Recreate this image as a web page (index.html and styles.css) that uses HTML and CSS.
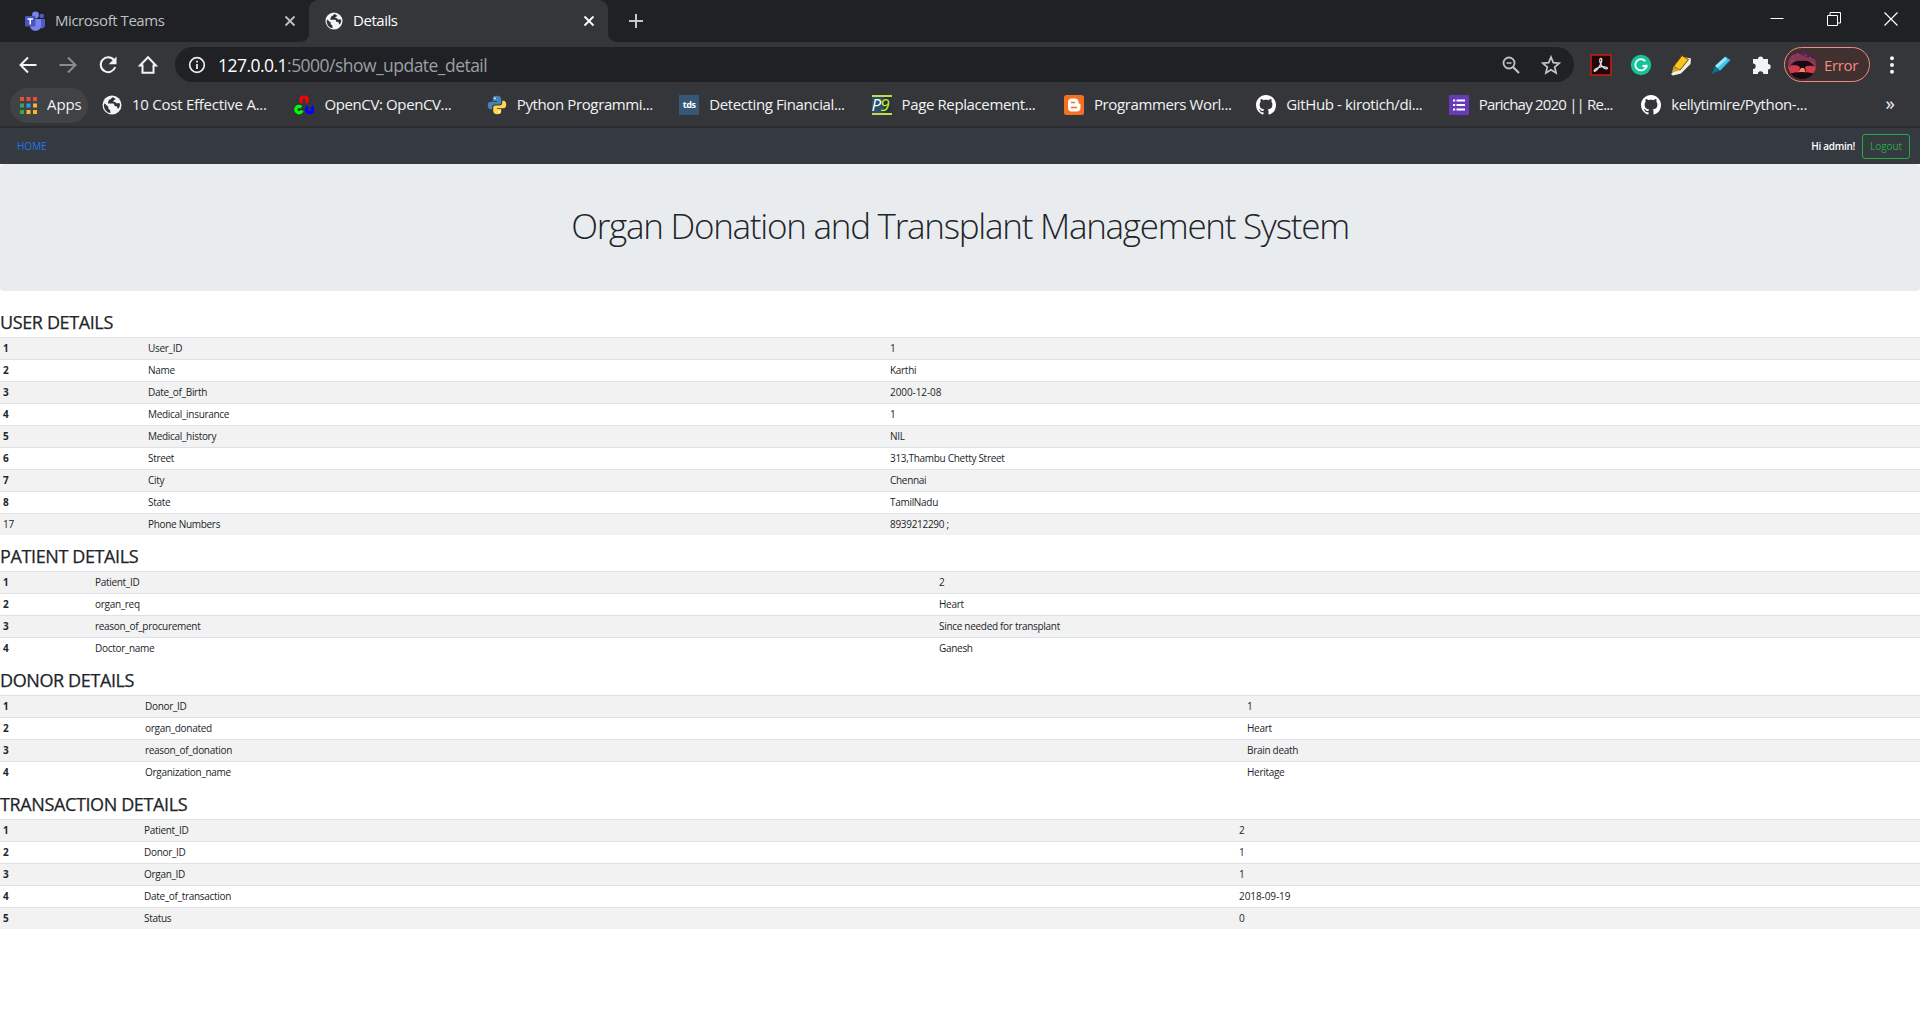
FILE: index.html
```html
<!DOCTYPE html>
<html lang="en">
<head>
<meta charset="utf-8">
<title>Details</title>
<link rel="stylesheet" href="styles.css">
</head>
<body>
<svg class="defs" aria-hidden="true">
  <symbol id="globe" viewBox="0 0 20 20"><circle cx="10" cy="10" r="9.5" fill="#f1f3f4"/><path d="M2.3 8.2l4 3.6v1.6l2 2v2.7C4.500 17.500 1.800 14 1.900 10zM11 2.200c-2 .5-1.500 2-3.500 2.400-1.200.2-.6 2-1.500 2.400v1.600h5.400c1.200.4.6 2.400 1.800 2.600h1.500c.8 1 .6 2.300 1.500 2.600 1.500-1.600 2-3.500 1.600-5.600-1.500.3-3.500.2-4-.5-.5-1-1.300-1-2.600-1-.3-1.300 1.800-1.400 2.400-2.600z" fill="#303235"/></symbol>
  <symbol id="close" viewBox="0 0 12 12"><path d="M1.500 1.500l9 9M10.500 1.500l-9 9" fill="none" stroke="currentColor" stroke-width="1.800"/></symbol>
  <symbol id="github" viewBox="0 0 16 16"><path fill="#fff" d="M8 0C3.580 0 0 3.580 0 8c0 3.540 2.290 6.530 5.470 7.590.4.07.55-.17.55-.38 0-.19-.01-.82-.01-1.490-2.010.37-2.530-.49-2.690-.94-.09-.23-.48-.94-.82-1.130-.28-.15-.68-.52-.01-.53.63-.01 1.080.58 1.230.82.72 1.210 1.870.87 2.330.66.07-.52.28-.87.51-1.070-1.780-.2-3.640-.89-3.640-3.950 0-.87.31-1.590.82-2.150-.08-.2-.36-1.020.08-2.120 0 0 .67-.21 2.200.82.64-.18 1.320-.27 2-.27s1.360.09 2 .27c1.530-1.040 2.200-.82 2.200-.82.44 1.100.16 1.920.08 2.120.51.56.82 1.270.82 2.150 0 3.070-1.870 3.750-3.650 3.950.29.25.54.73.54 1.480 0 1.070-.01 1.930-.01 2.200 0 .21.15.46.55.38A8.010 8.010 0 0016 8c0-4.420-3.580-8-8-8z"/></symbol>
</svg>

<header class="browser">
  <div class="tabs">
    <div class="tab">
      <svg class="i20" viewBox="0 0 20 20"><circle cx="16.800" cy="5" r="2.300" fill="#5059c9"/><path d="M13 8h7v6c0 4-5 4.500-6 2z" fill="#5059c9"/><circle cx="10.500" cy="4" r="3.400" fill="#7b83eb"/><path d="M5 8h11v6.500c0 7-11 7-11 0z" fill="#7b83eb"/><rect x="0" y="5" width="10.500" height="10.500" rx="1" fill="#4b53bc"/><path d="M2.500 8h5.500M5.250 8v5.500" stroke="#fff" stroke-width="1.500"/></svg>
      <span class="tab-title">Microsoft Teams</span>
      <svg class="x"><use href="#close"/></svg>
    </div>
    <div class="tab active">
      <svg class="i18"><use href="#globe"/></svg>
      <span class="tab-title">Details</span>
      <svg class="x"><use href="#close"/></svg>
    </div>
    <svg class="plus" viewBox="0 0 16 16"><path d="M8 1v14M1 8h14" stroke="#c6c9cc" stroke-width="2"/></svg>
    <div class="window">
      <svg viewBox="0 0 14 14"><path d="M.5 6.500h13" stroke="#fff"/></svg>
      <svg viewBox="0 0 14 14"><path d="M.5 3.500h10v10H.5zM3 3V.5h10.500V11H11" fill="none" stroke="#fff"/></svg>
      <svg viewBox="0 0 14 14"><path d="M.5.5l13 13M13.500.5l-13 13" stroke="#fff" stroke-width="1.200"/></svg>
    </div>
  </div>

  <div class="toolbar">
    <div class="nav-icons">
      <svg viewBox="0 0 20 20"><path d="M18.500 10H3M10 2.500L2.500 10l7.500 7.500" class="stroke"/></svg>
      <svg viewBox="0 0 20 20" class="dim"><path d="M1.500 10H17M10 2.500l7.500 7.500-7.500 7.500" class="stroke"/></svg>
      <svg viewBox="0 0 20 20"><path d="M16 5.200A7.400 7.400 0 1 0 17.200 12" class="stroke"/><path d="M18.500 1.500v7.800h-7.800z" fill="#f1f3f4"/></svg>
      <svg viewBox="0 0 20 20"><path d="M2 10.500l8-8.300 8 8.300h-2.500v7.300h-11v-7.300z" class="stroke"/></svg>
    </div>
    <div class="omnibox">
      <svg class="info" viewBox="0 0 18 18"><circle cx="9" cy="9" r="7.300" fill="none" stroke="#e8eaed" stroke-width="1.700"/><path d="M9 8v5M9 4.800v1.700" stroke="#e8eaed" stroke-width="1.800"/></svg>
      <span class="url"><b>127.0.0.1</b>:5000/show_update_detail</span>
      <svg class="i18" viewBox="0 0 18 18"><circle cx="7" cy="7" r="5.500" fill="none" stroke="#bdc1c6" stroke-width="1.800"/><path d="M11 11l6 6" stroke="#bdc1c6" stroke-width="2.200"/><path d="M4.500 7h5" stroke="#bdc1c6" stroke-width="1.500"/></svg>
      <svg class="i20 star" viewBox="0 0 20 20"><path d="M10 2l2.300 5.600 6 .5-4.600 3.900 1.400 5.900L10 14.800l-5.100 3.100L6.300 12 1.700 8.100l6-.5z" fill="none" stroke="#c3c7cb" stroke-width="1.700"/></svg>
    </div>
    <div class="extensions">
      <svg viewBox="0 0 22 22"><rect x="1" y="1" width="20" height="20" fill="#220506" stroke="#c11d12" stroke-width="1.600"/><path d="M10.500 4.500c2.500-.5 1 5-1.500 8.500-2 3.500-5 5.500-4.800 3.600.2-2 6-4.200 9.500-4 4 .1 5 2.500 2.500 2.300-3-.3-6.500-5-6.500-8.500 0-1 .2-1.700.8-1.900z" fill="none" stroke="#ddd" stroke-width="1.300"/></svg>
      <svg viewBox="0 0 22 22"><circle cx="11" cy="11" r="10.200" fill="#15c39a"/><path d="M15.200 7.200A5.600 5.600 0 1 0 16.400 12H12.500" fill="none" stroke="#fff" stroke-width="1.800"/><path d="M14 10.800h3.400V14z" fill="#fff"/></svg>
      <svg viewBox="0 0 22 22"><path d="M4 17l10-14 7 1.500-.5 5.500-9.500 9.500-8 2-2-1.500z" fill="#f4f1df"/><path d="M3.500 12.500L12 1.500l6.500 4L10 16z" fill="#f8c51c" stroke="#5b4514"/><path d="M3.500 12.500l6.500 3.500-4 1.500-4 .5z" fill="#d5a128"/></svg>
      <svg viewBox="0 0 22 22"><path d="M5 12L15.500 2.500 20.500 6 10 17z" fill="#45c5e8" stroke="#176b91"/><path d="M15 3l2 2-10 9-2-2z" fill="#a2e9f6"/><path d="M5 12l5 4.800-4 .9-4.500 2.800z" fill="#12718e"/></svg>
      <svg viewBox="0 0 22 22"><path d="M3 5h5a2.600 2.600 0 0 1 5.200 0H18v5a2.700 2.700 0 0 1 0 5.400V20h-4.700a2.700 2.700 0 0 0-5.400 0H3v-5a2.700 2.700 0 0 0 0-5.400z" fill="#f1f3f4"/></svg>
    </div>
    <div class="profile">
      <svg class="avatar" viewBox="0 0 28 28"><defs><clipPath id="round"><circle cx="14" cy="14" r="14"/></clipPath></defs><g clip-path="url(#round)"><rect width="28" height="28" fill="#52234d"/><path d="M0 8Q7 0 14 4T28 8v8H0z" fill="#873553"/><path d="M0 16l10-2h9l9 2v6H0z" fill="#d23c48"/><path d="M3 5l3 2M9 2l2 3M16 3l3 2M21 6l3 2M2 10l4-1M22 11l4 1" stroke="#a34669"/><path d="M3 14q4-5 11-4 8-1 12 5-7-1-9 1l1 5h-7l1-5q-4-3-9-2z" fill="#160b14"/><path d="M13 17h3l2 5h-8z" fill="#ff835a"/><path d="M0 23q14-4 28 0v5H0z" fill="#1b0911"/></g></svg>
      <span>Error</span>
    </div>
    <svg class="dots" viewBox="0 0 4 18"><circle cx="2" cy="2.200" r="2"/><circle cx="2" cy="9" r="2"/><circle cx="2" cy="15.800" r="2"/></svg>
  </div>

  <nav class="bookmarks">
    <div class="apps">
      <svg viewBox="0 0 17 17"><path d="M0 0h4v4H0zM6.500 0h4v4h-4zM13 0h4v4h-4z" fill="#ea4c3e"/><path d="M0 6.500h4v4H0zM0 13h4v4H0z" fill="#34a853"/><path d="M6.500 6.500h4v4h-4z" fill="#289bea"/><path d="M13 6.500h4v4h-4zM6.500 13h4v4h-4zM13 13h4v4h-4z" fill="#f9b52b"/></svg>
      <span>Apps</span>
    </div>
    <div class="mark"><svg><use href="#globe"/></svg><span>10 Cost Effective A...</span></div>
    <div class="mark"><svg viewBox="0 0 20 20"><g fill="none" stroke-width="3.200"><path d="M8.200 7.600a3.200 3.200 0 1 1 3.600 0" stroke="#f00"/><path d="M7.300 12.300a3.200 3.200 0 1 0 .8 3.200" stroke="#0f0"/><path d="M14 11.800a3.200 3.200 0 1 0 3.400 0" stroke="#00f"/></g></svg><span>OpenCV: OpenCV...</span></div>
    <div class="mark"><svg viewBox="0 0 20 20"><path d="M9.800.8C5.500.8 5.800 2.700 5.800 4v2h4.300v.8H3.500C1.500 6.800.8 8.500.8 10.500s1 3.700 2.700 3.700h1.600v-2c0-1.600 1-2.700 2.700-2.700h4c1.400 0 2.300-.9 2.300-2.300V4c0-2-1.500-3.200-4.300-3.200z" fill="#4584b6"/><path d="M10.200 19.200c4.300 0 4-1.900 4-3.200v-2H9.900v-.8h6.600c2 0 2.700-1.700 2.700-3.700s-1-3.700-2.700-3.700h-1.300v2c0 1.600-1 2.700-2.700 2.700h-4c-1.400 0-2.300.9-2.300 2.300V16c0 2 1.500 3.200 4 3.200z" fill="#ffd64a"/><circle cx="7.900" cy="3.300" r=".9" fill="#fff"/><circle cx="12" cy="16.700" r=".9" fill="#fff"/></svg><span>Python Programmi...</span></div>
    <div class="mark"><b class="tds">tds</b><span>Detecting Financial...</span></div>
    <div class="mark"><b class="p9"><i>P</i><em>9</em></b><span>Page Replacement...</span></div>
    <div class="mark"><svg viewBox="0 0 20 20"><rect width="20" height="20" rx="2.500" fill="#f57121"/><path d="M7.500 3.500H11c2 0 3.500 1.300 3.500 3.500 0 1.600.3 1.700 1.300 1.700.5 0 .7.300.7.800v3.300c0 2.200-1.500 3.700-3.700 3.700H7.500C5.300 16.500 4 15 4 13V7c0-2.200 1.500-3.500 3.500-3.500z" fill="#fff"/><path d="M7.500 7.500h3M7.500 12.500h5" stroke="#f57121" stroke-width="1.600" stroke-linecap="round"/></svg><span>Programmers Worl...</span></div>
    <div class="mark"><svg><use href="#github"/></svg><span>GitHub - kirotich/di...</span></div>
    <div class="mark"><svg viewBox="0 0 20 20"><rect width="20" height="20" rx="1" fill="#673ab7"/><path d="M4 5.500h2.200M4 10h2.200M4 14.500h2.200M7.500 5.500H16M7.500 10H16M7.500 14.500H16" stroke="#fff" stroke-width="2"/></svg><span class="tight">Parichay 2020 || Re...</span></div>
    <div class="mark"><svg><use href="#github"/></svg><span>kellytimire/Python-...</span></div>
    <span class="more">»</span>
  </nav>
</header>

<nav class="navbar">
  <a class="home">HOME</a>
  <strong>Hi admin!</strong>
  <button class="logout">Logout</button>
</nav>

<main>
  <section class="jumbotron"><h1>Organ Donation and Transplant Management System</h1></section>

  <h2>USER DETAILS</h2>
  <table class="user">
    <colgroup><col class="a"><col class="b"><col></colgroup>
    <tr><th>1</th><td>User_ID</td><td>1</td></tr>
    <tr><th>2</th><td>Name</td><td>Karthi</td></tr>
    <tr><th>3</th><td>Date_of_Birth</td><td class="num">2000-12-08</td></tr>
    <tr><th>4</th><td>Medical_insurance</td><td>1</td></tr>
    <tr><th>5</th><td>Medical_history</td><td>NIL</td></tr>
    <tr><th>6</th><td>Street</td><td>313,Thambu Chetty Street</td></tr>
    <tr><th>7</th><td>City</td><td>Chennai</td></tr>
    <tr><th>8</th><td>State</td><td>TamilNadu</td></tr>
    <tr><td>17</td><td>Phone Numbers</td><td>8939212290 ;</td></tr>
  </table>

  <h2>PATIENT DETAILS</h2>
  <table class="patient">
    <colgroup><col class="a"><col class="b"><col></colgroup>
    <tr><th>1</th><td>Patient_ID</td><td>2</td></tr>
    <tr><th>2</th><td>organ_req</td><td>Heart</td></tr>
    <tr><th>3</th><td>reason_of_procurement</td><td>Since needed for transplant</td></tr>
    <tr><th>4</th><td>Doctor_name</td><td>Ganesh</td></tr>
  </table>

  <h2>DONOR DETAILS</h2>
  <table class="donor">
    <colgroup><col class="a"><col class="b"><col></colgroup>
    <tr><th>1</th><td>Donor_ID</td><td>1</td></tr>
    <tr><th>2</th><td>organ_donated</td><td>Heart</td></tr>
    <tr><th>3</th><td>reason_of_donation</td><td>Brain death</td></tr>
    <tr><th>4</th><td>Organization_name</td><td>Heritage</td></tr>
  </table>

  <h2>TRANSACTION DETAILS</h2>
  <table class="transaction">
    <colgroup><col class="a"><col class="b"><col></colgroup>
    <tr><th>1</th><td>Patient_ID</td><td>2</td></tr>
    <tr><th>2</th><td>Donor_ID</td><td>1</td></tr>
    <tr><th>3</th><td>Organ_ID</td><td>1</td></tr>
    <tr><th>4</th><td>Date_of_transaction</td><td class="num">2018-09-19</td></tr>
    <tr><th>5</th><td>Status</td><td>0</td></tr>
  </table>
</main>
</body>
</html>
```
FILE: styles.css
```css
* { box-sizing: border-box; }
body {
  margin: 0;
  height: 1023px;
  overflow: hidden;
  background: #fff;
  color: #212529;
  font-family: "Open Sans", "Noto Sans", sans-serif;
  font-size: 10px;
}
svg { display: block; flex: none; }
.defs { display: none; }
.i18 { width: 18px; height: 18px; }
.i20 { width: 20px; height: 20px; }

/* Browser window */
.browser { height: 128px; background: #35363a; color: #f1f3f4; border-bottom: 2px solid #292b2e; white-space: nowrap; }
.tabs { height: 42px; display: flex; align-items: center; background: #202124; font-size: 15px; letter-spacing: -.45px; }
.tab { width: 309px; height: 42px; padding: 0 13px 1px 25px; display: flex; align-items: center; gap: 10px; color: #bdc1c6; }
.tab.active {
  position: relative;
  width: 299px;
  padding-left: 16px;
  background: #35363a;
  color: #fff;
  border-radius: 9px 9px 0 0;
}
.tab.active::before, .tab.active::after {
  content: "";
  position: absolute;
  bottom: 0;
  width: 8px;
  height: 8px;
}
.tab.active::before { left: -8px; background: radial-gradient(circle at 0 0, #202124 7.500px, #35363a 8px); }
.tab.active::after { right: -8px; background: radial-gradient(circle at 100% 0, #202124 7.500px, #35363a 8px); }
.tab-title { flex: 1; padding-bottom: 2px; }
.x { width: 12px; height: 12px; }
.plus { width: 16px; height: 16px; margin-left: 20px; }
.window { margin-left: auto; padding: 0 22px 5px 0; display: flex; gap: 43px; }
.window svg { width: 14px; height: 14px; }

.toolbar { height: 44px; display: flex; align-items: center; padding: 1px 26px 0 18px; }
.nav-icons { display: flex; gap: 20px; width: 157px; }
.nav-icons svg { width: 20px; height: 20px; }
.stroke { fill: none; stroke: #f1f3f4; stroke-width: 2; }
.dim { opacity: .45; }
.omnibox { width: 1399px; height: 35px; padding: 0 13px; border-radius: 18px; background: #202124; display: flex; align-items: center; }
.info { width: 18px; height: 18px; }
.url { flex: 1; margin-left: 12px; color: #9aa0a6; font-size: 17.500px; letter-spacing: -.53px; }
.url b { color: #fff; font-weight: 400; }
.star { margin-left: 21px; }
.extensions { display: flex; gap: 18px; margin-left: 16px; }
.extensions svg { width: 22px; height: 22px; }
.profile { width: 86px; height: 35px; margin-left: 12px; padding-left: 3px; display: flex; align-items: center; gap: 8px; border: 1px solid #f28b82; border-radius: 18px; background: #40302f; color: #f28b82; font-size: 15px; letter-spacing: -.35px; }
.avatar { width: 28px; height: 28px; }
.dots { width: 4px; height: 18px; margin-left: auto; fill: #f1f3f4; }

.bookmarks { height: 40px; display: flex; align-items: center; font-size: 15px; letter-spacing: -.38px; padding-bottom: 2px; }
.bookmarks span { padding-bottom: 2px; }
.apps { width: 78px; height: 35px; margin: 0 14px 0 10px; padding-left: 10px; display: flex; align-items: center; gap: 10px; border-radius: 18px; background: #414246; letter-spacing: -.1px; }
.apps svg { width: 17px; height: 17px; }
.mark { width: 192.400px; flex: none; display: flex; align-items: center; gap: 10px; }
.mark:nth-child(2) { letter-spacing: -.25px; }
.mark .tight { letter-spacing: -.8px; }
.mark svg { width: 20px; height: 20px; }
.tds { width: 20px; height: 20px; background: #355876; color: #fff; font-size: 9px; line-height: 19px; text-align: center; }
.p9 { width: 20px; height: 20px; border: solid #c6d94d; border-width: 2px 0; background: linear-gradient(90deg, #294f6c 60%, #28363a 60%); font-size: 17px; font-weight: 400; line-height: 16px; letter-spacing: -1px; }
.p9 i { color: #fff; }
.p9 em { color: #c8ed21; }
.more { margin: -3px 0 0 52px; font-size: 19px; }

/* Page */
.navbar { height: 36px; padding: 0 10px 0 17px; display: flex; align-items: center; background: #343a40; }
.home { flex: 1; color: #2474e8; }
.navbar strong { color: #fff; font-weight: 600; letter-spacing: -.3px; }
.logout { width: 48px; height: 25px; margin-left: 7px; padding: 0; border: 1px solid #28a745; border-radius: 3px; background: none; color: #28a745; font: inherit; letter-spacing: -.1px; }
.jumbotron { height: 127px; margin-bottom: 10px; padding-top: 37px; background: #e9ecef; border-radius: 4px; text-align: center; }
h1 { margin: 0; font-size: 35px; font-weight: 300; line-height: 50px; letter-spacing: -1.260px; white-space: nowrap; }
h2 { margin: 0; height: 36px; padding-top: 9px; font-size: 18px; font-weight: 500; line-height: 24px; letter-spacing: -.38px; -webkit-text-stroke: .25px #212529; }
table { width: 100%; border-collapse: separate; border-spacing: 0; table-layout: fixed; }
th, td { height: 22px; padding: 0 3px 1px; border-top: 1px solid #dee2e6; text-align: left; line-height: 20px; font-weight: 400; letter-spacing: -.3px; white-space: nowrap; }
td.num { letter-spacing: -.08px; }
th { font-weight: 700; }
tr:nth-child(odd) { background: #f2f2f2; }
.user .a { width: 145px; } .user .b { width: 742px; }
.patient .a { width: 92px; } .patient .b { width: 844px; }
.donor .a { width: 142px; } .donor .b { width: 1102px; }
.transaction .a { width: 141px; } .transaction .b { width: 1095px; }
```
